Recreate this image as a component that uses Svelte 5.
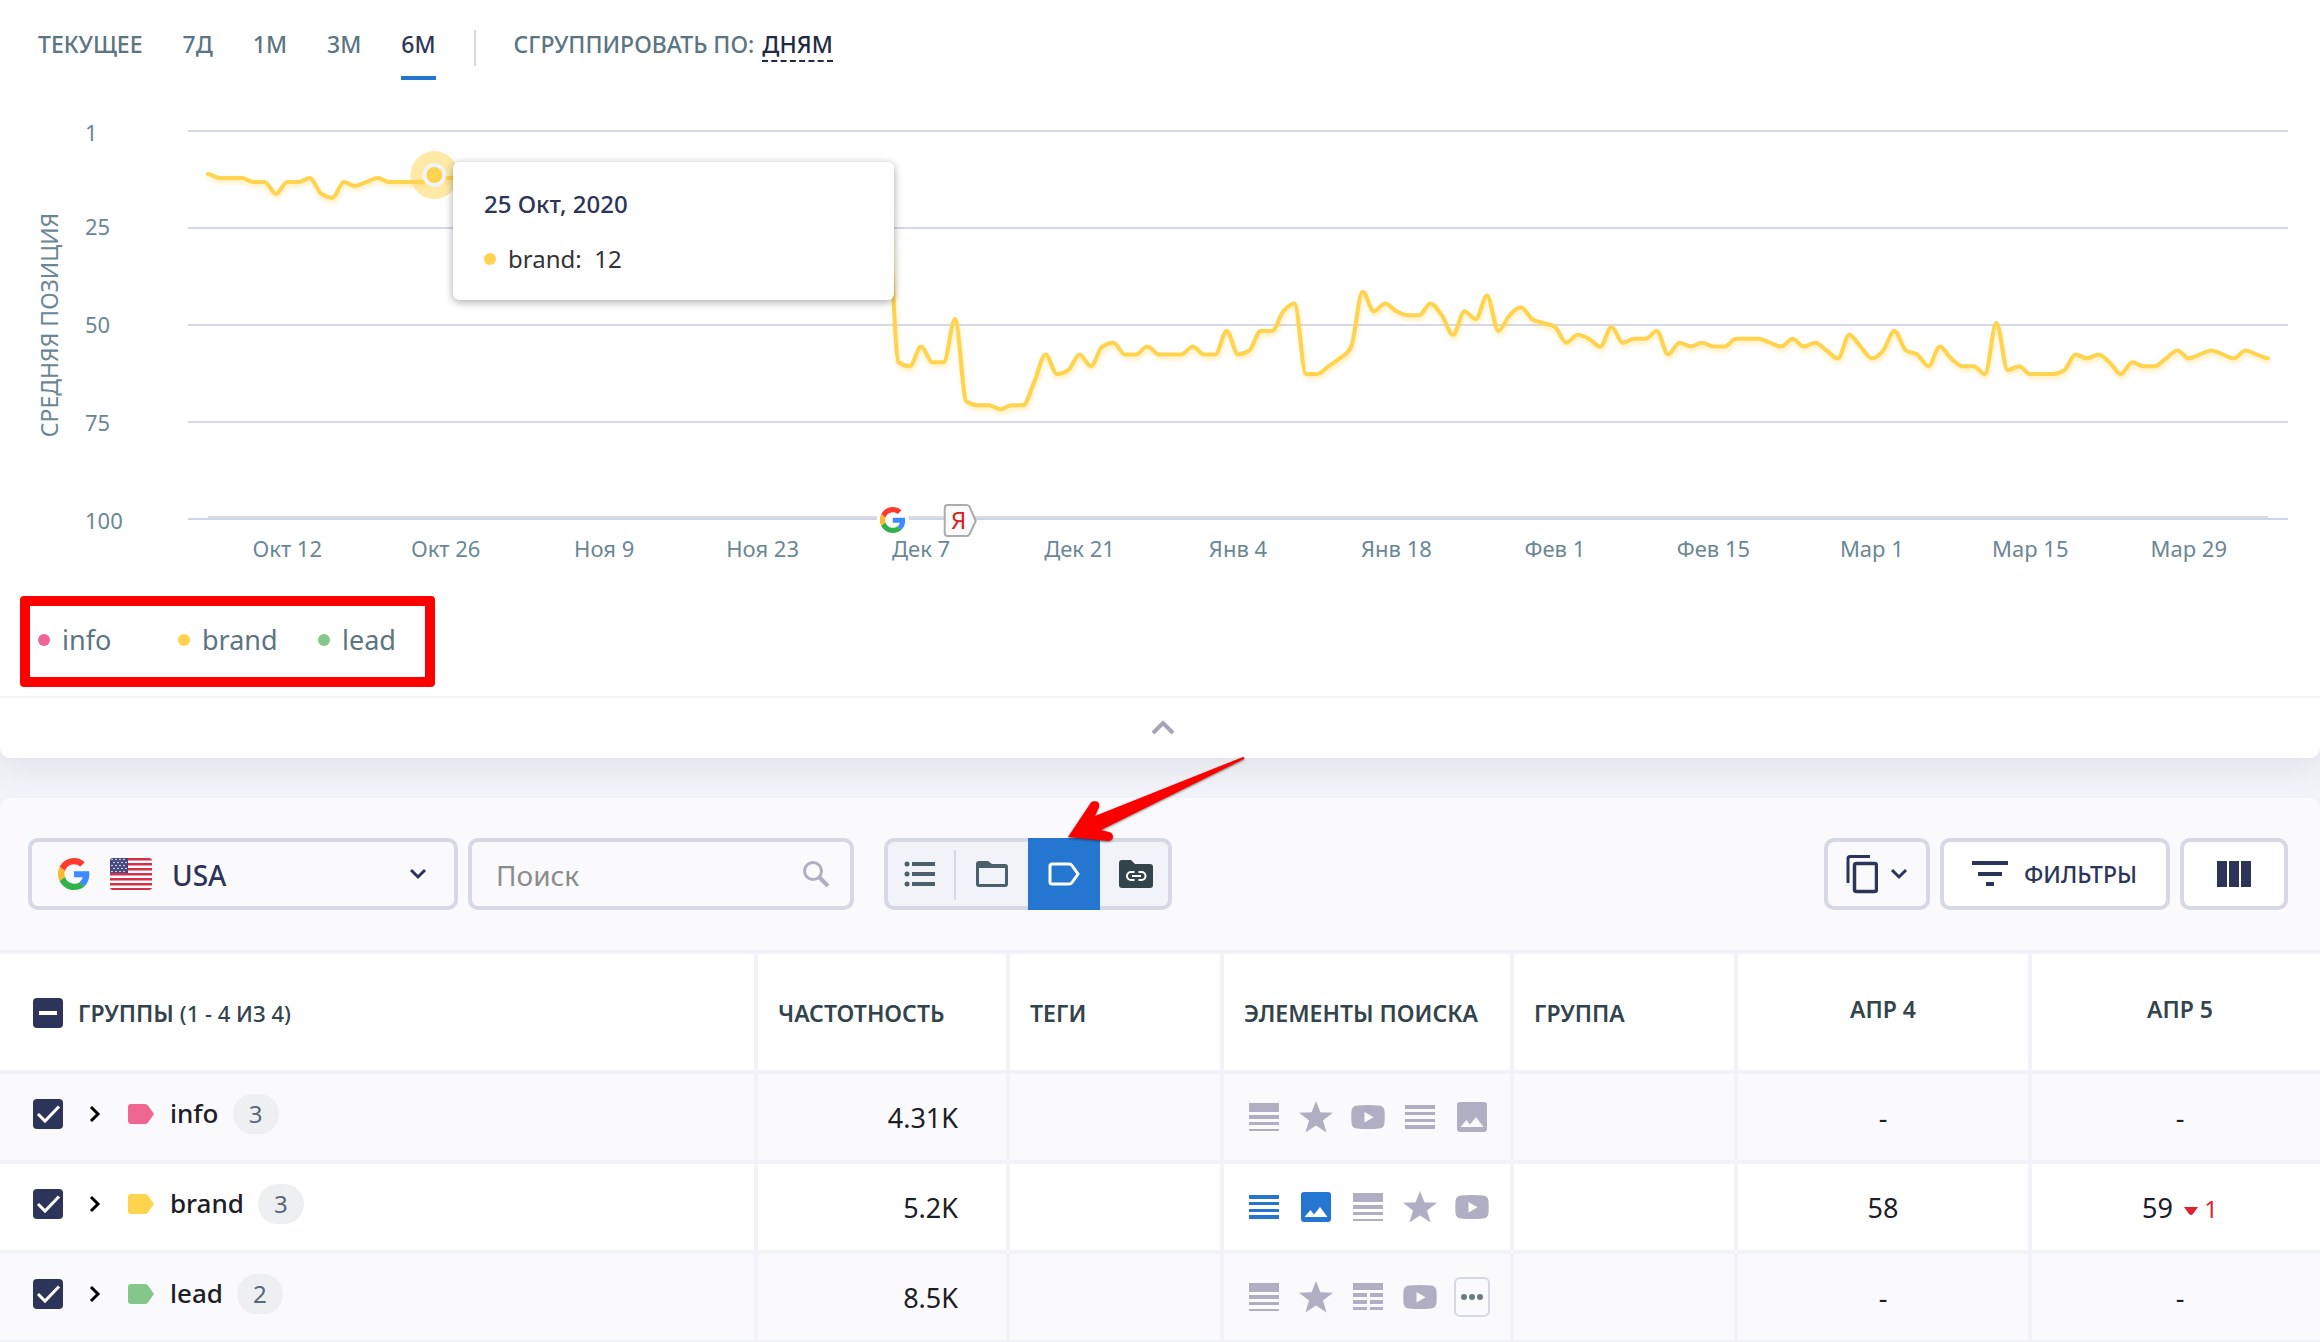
<script lang="ts">
  const periods = ['ТЕКУЩЕЕ', '7Д', '1М', '3М', '6М'];
  let period = $state('6М');

  // Average position per day, starting on Oct 5, 2020
  const brand = [
    12, 13, 13, 13, 14, 14, 17, 14, 14, 13, 17, 18, 14, 15, 14, 13, 14, 14, 14, 14,
    13, 13, 13, 13, 13, 13, 13, 13, 13, 13, 13, 13, 13, 13, 13, 13, 13, 13, 13, 13,
    13, 13, 13, 13, 13, 13, 13, 13, 13, 13, 13, 13, 13, 13, 13, 13, 13, 13, 13, 13,
    18, 60, 61, 56, 60, 60, 49, 70, 71, 71, 72, 71, 71, 65, 58, 63, 62, 58, 61, 56,
    55, 58, 58, 56, 58, 58, 58, 56, 58, 58, 52, 58, 57, 52, 52, 47, 45, 63, 63, 61,
    59, 56, 42, 47, 45, 47, 48, 48, 45, 48, 53, 47, 49, 43, 52, 48, 46, 49, 50, 51,
    55, 53, 54, 56, 51, 55, 54, 54, 52, 58, 55, 56, 55, 56, 56, 54, 54, 54, 55, 56,
    54, 56, 55, 57, 59, 53, 56, 59, 57, 52, 57, 58, 61, 56, 59, 61, 61, 63, 50, 62,
    61, 63, 63, 63, 62, 58, 59, 58, 60, 63, 60, 61, 61, 59, 57, 59, 58, 57, 58, 59,
    57, 58, 59
  ];

  const xTicks = [
    'Окт 12', 'Окт 26', 'Ноя 9', 'Ноя 23', 'Дек 7', 'Дек 21', 'Янв 4',
    'Янв 18', 'Фев 1', 'Фев 15', 'Мар 1', 'Мар 15', 'Мар 29'
  ];
  const yTicks = [1, 25, 50, 75, 100];

  const plot = { left: 188, right: 32, top: 51, height: 388, inset: 20 };
  let chartWidth = $state(2320);

  const startX = plot.left + plot.inset;
  let step = $derived((chartWidth - plot.right - plot.inset - startX) / (brand.length - 1));
  const y = (v: number) => plot.top + ((v - 1) / 99) * plot.height;
  const x = (day: number, s: number) => startX + day * s;
  const gridY = (i: number) => plot.top + (i * plot.height) / (yTicks.length - 1);

  // Monotone cubic interpolation
  function spline(values: number[], s: number) {
    const ys = values.map(y);
    const slopes = ys.map((v, i) => {
      if (i === 0 || i === ys.length - 1) return 0;
      const a = v - ys[i - 1];
      const b = ys[i + 1] - v;
      if (a * b <= 0) return 0;
      return Math.sign(a) * Math.min(Math.abs(a), Math.abs(b), Math.abs(a + b) / 4) * 2;
    });
    let d = `M${startX},${ys[0]}`;
    for (let i = 1; i < ys.length; i++) {
      const x0 = x(i - 1, s);
      const x1 = x(i, s);
      d += `C${x0 + s / 3},${ys[i - 1] + slopes[i - 1] / 3} ${x1 - s / 3},${ys[i] - slopes[i] / 3} ${x1},${ys[i]}`;
    }
    return d;
  }

  let line = $derived(spline(brand, step));

  const groups = [
    { name: 'info', color: '#f06693', count: 3, freq: '4.31K', items: ['snippet', 'star', 'video', 'lines', 'image'], active: 0, d4: '-', d5: '-', drop: 0 },
    { name: 'brand', color: '#ffd34d', count: 3, freq: '5.2K', items: ['lines', 'image', 'snippet', 'star', 'video'], active: 2, d4: '58', d5: '59', drop: 1 },
    { name: 'lead', color: '#85c78a', count: 2, freq: '8.5K', items: ['snippet', 'star', 'table', 'video', 'more'], active: 0, d4: '-', d5: '-', drop: 0 }
  ];
</script>

{#snippet google(size)}
  <svg width={size} height={size} viewBox="0 0 48 48" aria-hidden="true">
    <path fill="#ff3b30" d="M24 9.5c3.5 0 6.700 1.200 9.200 3.600l6.900-6.900C35.900 2.400 30.500 0 24 0 14.600 0 6.500 5.400 2.600 13.200l8 6.200C12.400 13.700 17.700 9.500 24 9.500z" />
    <path fill="#3d8bff" d="M47 24.600c0-1.600-.2-3.100-.4-4.600H24v9h12.900c-.6 3-2.300 5.500-4.800 7.200l7.700 6C44.400 38 47 31.800 47 24.600z" />
    <path fill="#fbb92e" d="M10.500 28.600c-.5-1.500-.8-3-.8-4.600s.3-3.100.8-4.600l-8-6.200C.9 16.500 0 20.100 0 24s.9 7.500 2.600 10.800z" />
    <path fill="#2fb24c" d="M24 48c6.500 0 11.900-2.100 15.900-5.800l-7.700-6c-2.200 1.500-4.900 2.300-8.200 2.300-6.300 0-11.600-4.200-13.500-9.900l-8 6.200C6.500 42.600 14.600 48 24 48z" />
  </svg>
{/snippet}

{#snippet chevron()}
  <svg width="18" height="12" viewBox="0 0 18 12" aria-hidden="true">
    <path d="M2 2l7 7 7-7" fill="none" stroke="#2d3459" stroke-width="3" />
  </svg>
{/snippet}

{#snippet serpIcon(kind)}
  <svg width="36" height="36" viewBox="0 0 36 36" fill="currentColor" aria-hidden="true">
    {#if kind === 'snippet'}
      <path d="M3 4h30v9H3zM3 16h30v4H3zM3 23h30v3H3zM3 30h30v2H3z" />
    {:else if kind === 'star'}
      <path d="M18 2l4.400 11.300 12.600.4-10 7.700 3.600 12L18 26.500 7.400 33.400l3.600-12-10-7.700 12.600-.4z" />
    {:else if kind === 'video'}
      <path fill-rule="evenodd" d="M7 6.500Q18 5.500 29 6.500Q34 7 34.500 12Q35 18 34.500 24Q34 29 29 29.500Q18 30.500 7 29.500Q2 29 1.500 24Q1 18 1.500 12Q2 7 7 6.500zM14.500 13v10.500l9-5.200z" />
    {:else if kind === 'lines'}
      <path d="M3 6h30v4H3zM3 13h30v3H3zM3 20h30v3H3zM3 26h30v4H3z" />
    {:else if kind === 'table'}
      <path d="M3 4h30v7H3zM3 14h14v4H3zM20 14h13v4H20zM3 21h14v4H3zM20 21h13v4H20zM3 28h14v3H3zM20 28h13v3H20z" />
    {:else}
      <path fill-rule="evenodd" d="M6 3h24a3 3 0 0 1 3 3v24a3 3 0 0 1-3 3H6a3 3 0 0 1-3-3V6a3 3 0 0 1 3-3zM6.500 28h23l-7.500-10-6 7.500-3.500-4.500z" />
    {/if}
  </svg>
{/snippet}

<main>
  <section class="chart-panel">
    <header class="chart-head">
      <div class="periods">
        {#each periods as p}
          <button class="period" class:current={p === period} aria-pressed={p === period} onclick={() => (period = p)}>{p}</button>
        {/each}
      </div>
      <span class="rule"></span>
      <div class="grouping">
        <label for="grouping">СГРУППИРОВАТЬ ПО:</label>
        <select id="grouping">
          <option>ДНЯМ</option>
        </select>
      </div>
    </header>

    <div class="chart" bind:clientWidth={chartWidth}>
      <svg width="100%" height="500" role="img" aria-label="Средняя позиция">
        <text class="axis-title" transform="rotate(-90)" x="-245" y="58" text-anchor="middle">СРЕДНЯЯ ПОЗИЦИЯ</text>
        {#each yTicks as t, i}
          <line x1={plot.left} x2={chartWidth - plot.right} y1={gridY(i)} y2={gridY(i)} stroke={t === 100 ? '#ccd6eb' : '#d6d8e5'} stroke-width="2" />
          <text class="axis" x="85" y={y(t) + 10}>{t}</text>
        {/each}
        <line x1={startX} x2={x(brand.length - 1, step)} y1={y(100) - 2} y2={y(100) - 2} stroke="#e2d9de" stroke-width="2" />
        {#each xTicks as label, i}
          <text class="axis" x={x(7 + i * 14, step)} y="477" text-anchor="middle">{label}</text>
        {/each}
        <path class="series" d={line} />
        <circle cx={x(20, step)} cy={y(12) + 1} r="24" fill="#ffd34d" fill-opacity=".5" />
        <circle cx={x(20, step)} cy={y(12) + 1} r="10" fill="#ffd34d" stroke="#f2f3f8" stroke-width="4" />
        <g transform="translate({x(60.5, step)} {y(100) + 1})">
          <circle r="16" fill="#fff" />
          <g transform="translate(-13 -13)">{@render google(26)}</g>
        </g>
        <g transform="translate({x(65, step) + 1} {y(100) - 14})">
          <path d="M3 0h19q2 0 3 2l6 14-6 13q-1 2-3 2H3q-3 0-3-3V3q0-3 3-3z" fill="#fafafa" stroke="#acacac" stroke-width="2" />
          <text class="yandex" x="14" y="24" text-anchor="middle">Я</text>
        </g>
      </svg>

      <div class="tooltip" style="left: {Math.round(x(20, step)) + 19}px">
        <strong>25 Окт, 2020</strong>
        <span><i class="dot" style="background: #ffd34d"></i>brand:&nbsp; 12</span>
      </div>
    </div>

    <div class="legend">
      {#each groups as g}
        <button><i class="dot" style="background: {g.color}"></i>{g.name}</button>
      {/each}
    </div>

    <button class="collapse" aria-label="Свернуть">
      <svg width="26" height="16" viewBox="0 0 26 16"><path d="M3 13L13 3l10 10" fill="none" stroke="#a5a3b8" stroke-width="4" /></svg>
    </button>
  </section>

  <section class="table-panel">
    <div class="toolbar">
      <div class="field engine">
        {@render google(32)}
        <svg class="flag" width="42" height="32" viewBox="0 0 42 32" aria-hidden="true">
          <rect width="42" height="32" fill="#fff" />
          {#each [0, 5, 10, 15, 20, 25, 30] as sy}
            <rect y={sy} width="42" height="2.500" fill="#d5304a" />
          {/each}
          <rect width="18" height="15" fill="#46467f" />
          {#each [2, 5, 8, 11, 14] as sy, r}
            {#each [2, 6, 10, 14] as sx}
              <circle cx={sx + (r % 2) * 2} cy={sy - 0.5} r=".8" fill="#fff" />
            {/each}
          {/each}
        </svg>
        <select aria-label="Поисковая система">
          <option>USA</option>
        </select>
        {@render chevron()}
      </div>

      <div class="field search">
        <input type="text" placeholder="Поиск" aria-label="Поиск" />
        <svg width="28" height="28" viewBox="0 0 28 28" aria-hidden="true">
          <circle cx="11" cy="11" r="8.500" fill="none" stroke="#b0aec2" stroke-width="3" />
          <path d="M17 17l9 9" stroke="#b0aec2" stroke-width="4" />
        </svg>
      </div>

      <div class="views">
        <button aria-label="Список" class="divided">
          <svg width="32" height="26" viewBox="0 0 32 26" fill="#4a606b">
            <circle cx="3" cy="3" r="2.500" /><circle cx="3" cy="13" r="2.500" /><circle cx="3" cy="23" r="2.500" />
            <path d="M8 1h23v4H8zM8 11h23v4H8zM8 21h23v4H8z" />
          </svg>
        </button>
        <button aria-label="Папки">
          <svg width="34" height="28" viewBox="0 0 34 28">
            <path fill="#4a606b" fill-rule="evenodd" d="M4 1h9l4 3h13a3 3 0 0 1 3 3v17a3 3 0 0 1-3 3H4a3 3 0 0 1-3-3V4a3 3 0 0 1 3-3zM4 8v16h26V8z" />
          </svg>
        </button>
        <button aria-label="Теги" aria-pressed="true" class="active">
          <svg width="32" height="24" viewBox="0 0 32 24">
            <path d="M4 2h17q2 0 3 1.500L30 12l-6 8.500Q23 22 21 22H4q-2 0-2-2V4q0-2 2-2z" fill="none" stroke="#fff" stroke-width="3" />
          </svg>
          <!-- Callout arrow aimed at the tag view -->
          <svg class="pointer" width="184" height="92" viewBox="0 0 184 92" aria-hidden="true">
            <path d="M179 3L31 62l4-9q1-4-2-5.500-4-1-6 1L4 83l40 4q4 0 5-4 0-4-4-5l-8-2L180 5q1-2-1-2z" fill="#fc0000" />
          </svg>
        </button>
        <button aria-label="Целевые страницы">
          <svg width="36" height="30" viewBox="0 0 36 30">
            <path fill="#33444c" d="M3 1h10l4 4h15a3 3 0 0 1 3 3v18a3 3 0 0 1-3 3H4a3 3 0 0 1-3-3V4a3 3 0 0 1 2-3z" />
            <path d="M16.500 13h-3.500a4 4 0 0 0 0 8h3.500M20.500 13h3a4 4 0 0 1 0 8h-3M14 17h9" fill="none" stroke="#fff" stroke-width="2" />
          </svg>
        </button>
      </div>

      <div class="actions">
        <button class="field copy" aria-label="Копировать">
          <svg width="32" height="40" viewBox="0 0 32 40" fill="none" stroke="#2d3459" stroke-width="3">
            <path d="M2 29V4.500Q2 2.500 4 2.500h20" />
            <rect x="8.500" y="9.500" width="22" height="28" rx="2" stroke-width="3.500" />
          </svg>
          {@render chevron()}
        </button>
        <button class="field filters">
          <svg width="36" height="26" viewBox="0 0 36 26" fill="#2d3459"><path d="M0 0h36v4H0zM6 11h24v4H6zM14 21h8v4h-8z" /></svg>
          ФИЛЬТРЫ
        </button>
        <button class="field columns" aria-label="Столбцы">
          <svg width="34" height="26" viewBox="0 0 34 26" fill="#2d3459"><path d="M0 0h10v26H0zM12 0h10v26H12zM24 0h10v26H24z" /></svg>
        </button>
      </div>
    </div>

    <table>
      <colgroup>
        <col />
        <col class="w-freq" />
        <col class="w-tags" />
        <col class="w-items" />
        <col class="w-group" />
        <col class="w-date" />
        <col class="w-last" />
      </colgroup>
      <thead>
        <tr>
          <th>
            <div class="name-cell head">
              <span class="check">
                <input type="checkbox" indeterminate={true} aria-label="Выбрать все" />
                <svg width="30" height="30" viewBox="0 0 30 30"><path d="M6 15h18" stroke="#fff" stroke-width="4" /></svg>
              </span>
              <span>ГРУППЫ <span class="range">(1 - 4 ИЗ 4)</span></span>
            </div>
          </th>
          <th>ЧАСТОТНОСТЬ</th>
          <th>ТЕГИ</th>
          <th>ЭЛЕМЕНТЫ ПОИСКА</th>
          <th>ГРУППА</th>
          <th class="date">АПР 4</th>
          <th class="date">АПР 5</th>
        </tr>
      </thead>
      <tbody>
        {#each groups as g}
          <tr>
            <td>
              <div class="name-cell">
                <span class="check">
                  <input type="checkbox" checked aria-label={g.name} />
                  <svg width="30" height="30" viewBox="0 0 30 30"><path d="M5 15l7 7L26 7.500" fill="none" stroke="#fff" stroke-width="3" /></svg>
                </span>
                <button class="expand" aria-label="Развернуть">
                  <svg width="12" height="18" viewBox="0 0 12 18"><path d="M2 2l7 7-7 7" fill="none" stroke="#000" stroke-width="3" /></svg>
                </button>
                <svg class="tag" width="26" height="20" viewBox="0 0 26 20">
                  <path d="M3 0h14q2 0 3 1.500L26 10l-6 8.500Q19 20 17 20H3q-3 0-3-3V3q0-3 3-3z" fill={g.color} />
                </svg>
                <span class="name">{g.name}</span>
                <span class="count">{g.count}</span>
              </div>
            </td>
            <td class="freq">{g.freq}</td>
            <td></td>
            <td>
              <div class="items">
                {#each g.items as kind, i}
                  {#if kind === 'more'}
                    <button class="more" aria-label="Ещё">
                      <svg width="22" height="6" viewBox="0 0 22 6" fill="#6b7b80"><circle cx="3" cy="3" r="3" /><circle cx="11" cy="3" r="3" /><circle cx="19" cy="3" r="3" /></svg>
                    </button>
                  {:else}
                    <span class="item" class:on={i < g.active}>{@render serpIcon(kind)}</span>
                  {/if}
                {/each}
              </div>
            </td>
            <td></td>
            <td class="pos">{g.d4}</td>
            <td class="pos">
              {g.d5}
              {#if g.drop}
                <span class="drop">
                  <svg width="14" height="8" viewBox="0 0 14 8"><path d="M0 0h14L9 7q-2 2-4 0z" fill="#e0212f" /></svg>
                  {g.drop}
                </span>
              {/if}
            </td>
          </tr>
        {/each}
      </tbody>
    </table>
  </section>
</main>

<style>
  :global(body) {
    margin: 0;
    background: #f2f3f8;
    overflow-x: hidden;
  }

  main {
    font-family: 'Noto Sans', 'Open Sans', sans-serif;
    font-size: 23px;
    color: #5b7582;
  }

  button,
  select,
  input {
    font: inherit;
    color: inherit;
    background: none;
    border: none;
    padding: 0;
    margin: 0;
    appearance: none;
    outline: none;
  }

  button,
  select {
    cursor: pointer;
  }

  svg {
    display: block;
    flex-shrink: 0;
  }

  /* Chart */
  .chart-panel {
    background: #fff;
    border-radius: 0 0 10px 10px;
    box-shadow: 0 10px 30px rgba(40, 50, 60, 0.08);
    margin-bottom: 40px;
  }

  .chart-head {
    display: flex;
    align-items: flex-start;
    gap: 38px;
    padding: 28px 38px 0;
    line-height: 32px;
    font-weight: 500;
  }

  .periods {
    display: flex;
    gap: 40px;
  }

  .period {
    padding-bottom: 16px;
    border-bottom: 4px solid transparent;
    line-height: 32px;
  }

  .period.current {
    color: #2d3459;
    border-color: #2476d1;
  }

  .rule {
    width: 2px;
    height: 36px;
    margin-top: 2px;
    background: #d6d8e5;
  }

  .grouping {
    display: flex;
    gap: 8px;
  }

  .grouping select {
    color: #1f2a44;
    line-height: 32px;
    border-bottom: 2px dashed #1f2a44;
  }

  .chart {
    position: relative;
  }

  .axis {
    font-size: 22px;
    fill: #6a8795;
  }

  .axis-title {
    fill: #6a8795;
  }

  .series {
    fill: none;
    stroke: #ffd34d;
    stroke-width: 4;
    stroke-linecap: round;
    stroke-linejoin: round;
    filter: drop-shadow(1px 3px 2px rgba(255, 211, 77, 0.4));
  }

  .yandex {
    font-size: 24px;
    fill: #d8201f;
  }

  .tooltip {
    position: absolute;
    top: 82px;
    box-sizing: border-box;
    width: 441px;
    padding: 24px 31px;
    display: flex;
    flex-direction: column;
    gap: 20px;
    line-height: 35px;
    background: #fff;
    border-radius: 6px;
    box-shadow: 0 2px 8px rgba(0, 0, 0, 0.35);
    color: #333;
    font-size: 24px;
  }

  .tooltip strong {
    font-weight: 500;
    color: #2d3459;
  }

  .tooltip span {
    display: flex;
    align-items: center;
    gap: 12px;
  }

  .dot {
    width: 12px;
    height: 12px;
    border-radius: 50%;
  }

  .legend {
    display: flex;
    width: max-content;
    box-sizing: border-box;
    margin: 16px 20px 9px;
    padding: 12px 0 15px 8px;
    border: 10px solid #f00;
    border-radius: 4px;
  }

  .legend button {
    display: flex;
    align-items: center;
    gap: 12px;
    width: 140px;
    font-size: 27px;
    line-height: 44px;
  }

  .legend button:last-child {
    width: 107px;
  }

  .collapse {
    display: flex;
    align-items: center;
    justify-content: center;
    width: 100%;
    height: 62px;
    padding-left: 6px;
    border-top: 2px solid #f2f3f8;
  }

  /* Toolbar */
  .table-panel {
    position: relative;
    background: #fafafc;
    border-radius: 10px 10px 0 0;
  }

  .toolbar {
    display: flex;
    gap: 10px;
    padding: 40px 32px 40px 28px;
  }

  .field {
    box-sizing: border-box;
    height: 72px;
    display: flex;
    align-items: center;
    border: 4px solid #d6d8e4;
    border-radius: 10px;
    color: #2d3459;
  }

  .engine {
    width: 430px;
    padding: 0 27px 0 26px;
    gap: 20px;
  }

  .engine select,
  .search input {
    flex: 1;
    min-width: 0;
    padding-top: 2px;
    font-size: 28px;
  }

  .engine select {
    font-weight: 500;
  }

  .flag {
    border-radius: 3px;
  }

  .search {
    width: 386px;
    padding: 0 20px 0 24px;
  }

  .search input::placeholder {
    color: #8c8c8c;
  }

  .views {
    display: flex;
    margin-left: 20px;
    border-radius: 10px;
    background: #f2f3f8;
    box-shadow: inset 0 0 0 4px #d6d8e4;
  }

  .views button {
    position: relative;
    display: flex;
    align-items: center;
    justify-content: center;
    width: 72px;
    height: 72px;
  }

  .views .divided::after {
    content: '';
    position: absolute;
    right: 0;
    top: 12px;
    width: 2px;
    height: 50px;
    background: #d6d8e4;
  }

  .views .active {
    background: #2476d1;
  }

  .pointer {
    position: absolute;
    left: 36px;
    top: -84px;
    z-index: 2;
    pointer-events: none;
    filter: drop-shadow(0 1px 1px rgba(0, 0, 0, 0.5));
  }

  .actions {
    display: flex;
    gap: 10px;
    margin-left: auto;
  }

  .copy {
    width: 106px;
    padding-left: 18px;
    gap: 12px;
  }

  .filters {
    width: 230px;
    padding-left: 28px;
    gap: 16px;
    background: #fff;
    font-weight: 500;
  }

  .columns {
    width: 108px;
    justify-content: center;
    background: #fff;
  }

  /* Table */
  table {
    width: 100%;
    table-layout: fixed;
    border-collapse: separate;
    border-spacing: 0;
    border-top: 4px solid #f2f3f8;
    color: #1c2026;
  }

  .w-freq { width: 252px; }
  .w-tags { width: 214px; }
  .w-items { width: 290px; }
  .w-group { width: 224px; }
  .w-date { width: 294px; }
  .w-last { width: 288px; }

  th,
  td {
    box-sizing: border-box;
    padding: 0 20px;
    border-right: 4px solid #f2f3f8;
    border-bottom: 4px solid #f2f3f8;
    text-align: left;
    background: #fff;
  }

  th {
    height: 120px;
    padding-top: 2px;
    font-weight: 600;
    color: #33444c;
    white-space: nowrap;
  }

  td {
    height: 90px;
    font-size: 27px;
  }

  tbody tr:nth-child(odd) td {
    background: #fafafc;
  }

  th:first-child,
  td:first-child {
    padding-left: 33px;
  }

  th.date {
    padding: 0 20px 6px;
    text-align: center;
  }

  th:last-child,
  td:last-child {
    padding-right: 12px;
    border-right: none;
  }

  .range {
    font-size: 22px;
    font-weight: 500;
  }

  .name-cell {
    display: flex;
    align-items: center;
    padding-bottom: 6px;
  }

  .name-cell.head {
    gap: 15px;
    padding-bottom: 0;
  }

  .check {
    display: grid;
    width: 30px;
    height: 30px;
  }

  .check input {
    grid-area: 1 / 1;
    width: 30px;
    height: 30px;
    border-radius: 4px;
    background: #2d3459;
  }

  .check svg {
    grid-area: 1 / 1;
    pointer-events: none;
  }

  .expand {
    margin: 0 27px 0 26px;
  }

  .name {
    margin: 0 14px 0 16px;
    padding-bottom: 3px;
    font-size: 26px;
    font-weight: 500;
  }

  .count {
    min-width: 46px;
    border-radius: 20px;
    background: #edeff0;
    color: #5b6779;
    font-size: 24px;
    line-height: 40px;
    text-align: center;
  }

  td.freq {
    padding-right: 48px;
    text-align: right;
  }

  .items {
    display: flex;
    align-items: center;
    gap: 16px;
    padding-left: 2px;
  }

  .item {
    color: #b0aec2;
  }

  .item.on {
    color: #2476d1;
  }

  .more {
    display: flex;
    align-items: center;
    justify-content: center;
    width: 40px;
    height: 40px;
    border: 2px solid #d6d8e4;
    border-radius: 6px;
    box-sizing: border-box;
  }

  .pos {
    text-align: center;
  }

  .drop {
    margin-left: 4px;
    font-size: 24px;
    color: #e0212f;
  }

  .drop svg {
    display: inline-block;
    vertical-align: middle;
  }
</style>
